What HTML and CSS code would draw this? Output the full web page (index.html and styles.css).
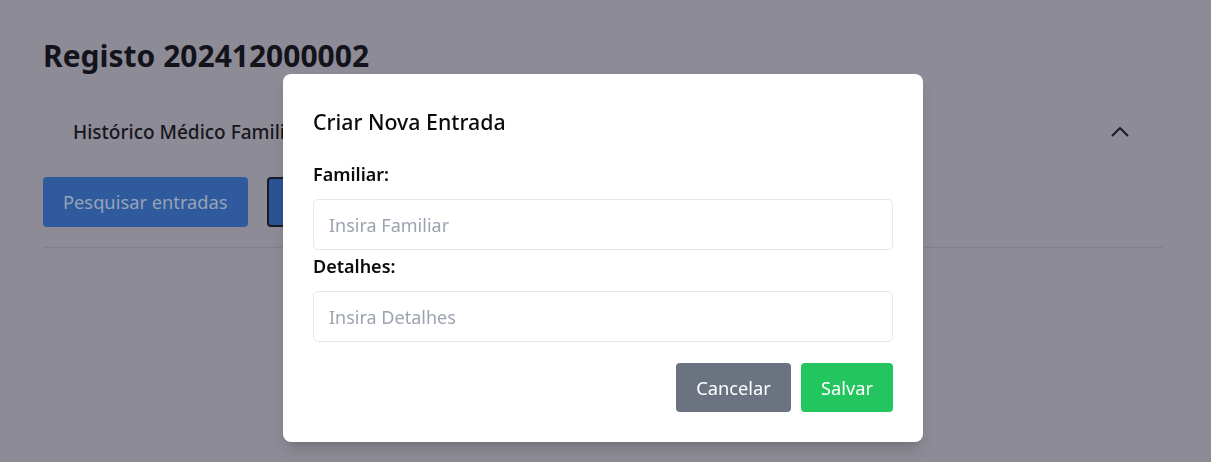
FILE: index.html
```html
<!DOCTYPE html>
<html lang="pt">
<head>
<meta charset="utf-8">
<title>Registo 202412000002</title>
<link rel="stylesheet" href="styles.css">
</head>
<body>
<main class="page">
  <h1 class="title">Registo 202412000002</h1>
  <section class="accordion">
    <div class="acc-header">
      <span class="acc-label">Histórico Médico Familiar</span>
      <svg class="chevron" viewBox="0 0 24 24" width="24" height="24" fill="none" stroke="currentColor" stroke-width="2" stroke-linecap="round" stroke-linejoin="round"><path d="M4.5 15.5 12 8l7.5 7.5"/></svg>
    </div>
    <div class="acc-actions">
      <button class="btn btn-search">Pesquisar entradas</button>
      <button class="btn btn-new">Criar nova entrada</button>
    </div>
  </section>
</main>

<div class="backdrop">
  <div class="modal" role="dialog" aria-labelledby="modal-title">
    <h2 class="modal-title" id="modal-title">Criar Nova Entrada</h2>
    <label class="field-label" for="familiar">Familiar:</label>
    <input class="field-input" id="familiar" type="text" placeholder="Insira Familiar">
    <label class="field-label" for="detalhes">Detalhes:</label>
    <input class="field-input" id="detalhes" type="text" placeholder="Insira Detalhes">
    <div class="modal-actions">
      <button class="mbtn mbtn-cancel">Cancelar</button>
      <button class="mbtn mbtn-save">Salvar</button>
    </div>
  </div>
</div>
</body>
</html>
```

FILE: styles.css
```css
* { box-sizing: border-box; }

html, body {
  margin: 0;
  padding: 0;
}

body {
  background: #8d8b95;
  font-family: "Noto Sans", "Open Sans", sans-serif;
  color: #16161e;
  width: 1211px;
  height: 462px;
  overflow: hidden;
}

.page {
  padding: 38px 48px 0 43px;
}

.title {
  margin: 0 0 24px;
  font-size: 30px;
  line-height: 36px;
  font-weight: 700;
  color: #13141b;
}

.accordion {
  border-bottom: 1px solid #817f8a;
  padding-bottom: 20px;
}

.acc-header {
  display: flex;
  align-items: center;
  justify-content: space-between;
  padding: 20px 31px 18px 30px;
}

.acc-label {
  font-size: 19px;
  line-height: 28px;
  font-weight: 500;
  color: #16161e;
}

.chevron {
  color: #1a1b24;
  display: block;
}

.acc-actions {
  display: flex;
  gap: 19px;
  margin-top: 13px;
}

.btn {
  font-family: inherit;
  font-size: 18.3px;
  line-height: 28px;
  height: 50px;
  padding: 0 20px;
  border-radius: 4px;
  border: 0;
  color: #97a3b6;
  background: #2f5b9e;
}

.btn-new {
  border: 2px solid #191c26;
  background: #2c5495;
}

.backdrop {
  position: fixed;
  inset: 0;
  display: flex;
  justify-content: center;
  align-items: flex-start;
  padding: 74px 5px 0 0;
}

.modal {
  width: 640px;
  background: #ffffff;
  border-radius: 8px;
  padding: 34px 30px 30px;
  box-shadow: 0 10px 15px -3px rgba(0,0,0,0.15), 0 4px 6px -4px rgba(0,0,0,0.12);
  display: flex;
  flex-direction: column;
}

.modal-title {
  margin: 0 0 24px;
  font-size: 21.3px;
  line-height: 28px;
  font-weight: 500;
  color: #0b0b0f;
}

.field-label {
  display: block;
  font-size: 18px;
  line-height: 28px;
  font-weight: 600;
  color: #0b0b0f;
  margin-bottom: 11px;
}

.field-input {
  display: block;
  width: 100%;
  height: 51px;
  border: 1px solid #e5e7eb;
  border-radius: 5px;
  padding: 0 15px;
  font-family: inherit;
  font-size: 18px;
  color: #111827;
  margin-bottom: 2px;
  outline: none;
}

.field-input::placeholder {
  color: #9ca3af;
}

.modal-actions {
  display: flex;
  justify-content: flex-end;
  gap: 10px;
  margin-top: 19px;
}

.mbtn {
  font-family: inherit;
  font-size: 18.3px;
  line-height: 28px;
  height: 49px;
  padding: 0 20px;
  border: 0;
  border-radius: 4px;
  color: #ffffff;
}

.mbtn-cancel { background: #6b7280; }
.mbtn-save { background: #22c55e; }
```
